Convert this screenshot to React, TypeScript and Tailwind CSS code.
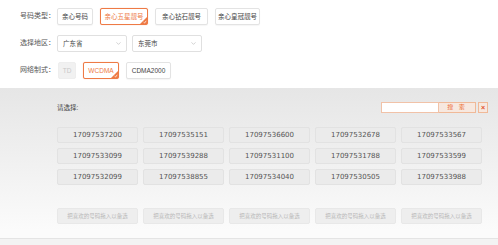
import { ChevronDown } from 'lucide-react';

const font = { fontFamily: '"Liberation Sans", "Noto Sans CJK SC", sans-serif' };

const numbers = [
    '17097537200', '17097535151', '17097536600', '17097532678', '17097533567',
    '17097533099', '17097539288', '17097531100', '17097531788', '17097533599',
    '17097532099', '17097538855', '17097534040', '17097530505', '17097533988',
];

function Corner() {
    return (
        <svg className="absolute right-0 bottom-0" width="7" height="7" viewBox="0 0 7 7">
            <polygon points="7,0 7,7 0,7" fill="#ee7a45" />
            <path d="M3.6 5.2 L4.6 6 L6.2 3.8" stroke="#fff" strokeWidth="0.7" fill="none" />
        </svg>
    );
}

function Opt({ label, w, active, disabled }: { label: string; w: string; active?: boolean; disabled?: boolean }) {
    const base = 'relative h-[17px] shrink-0 whitespace-nowrap flex items-center justify-center rounded-[2px] text-[6.5px] border';
    const look = active
        ? 'border-[#ee7a45] text-[#ee7a45] bg-white shadow-[0_0_1px_#f3b08f]'
        : disabled
            ? 'border-[#eeeeee] bg-[#f1f1f1] text-[#c8c8c8]'
            : 'border-[#e3e3e3] bg-white text-[#444] shadow-[0_1px_1px_rgba(0,0,0,0.04)]';
    return (
        <div className={`${base} ${look} ${w}`}>
            {label}
            {active && <Corner />}
        </div>
    );
}

function Row({ label, children }: { label: string; children: React.ReactNode }) {
    return (
        <div className="flex items-center h-[17px]">
            <div className="w-[37px] shrink-0 whitespace-nowrap text-[7px] text-[#555]">{label}</div>
            <div className="flex items-center gap-[7px]">{children}</div>
        </div>
    );
}

function Select({ value }: { value: string }) {
    return (
        <div className="w-[70px] h-[17px] flex items-center justify-between pl-[5px] pr-[4px] border border-[#e0e0e0] rounded-[2px] bg-white text-[6.5px] text-[#444]">
            <span>{value}</span>
            <ChevronDown size={7} color="#999" strokeWidth={1.5} />
        </div>
    );
}

export default function App() {
    return (
        <div className="w-[498px] h-[245px] bg-white overflow-hidden flex flex-col" style={font}>
            <div className="pt-[8px] pl-[20px] flex flex-col gap-[10px]">
                <Row label="号码类型：">
                    <Opt label="亲心号码" w="w-[36px]" />
                    <Opt label="亲心五星靓号" w="w-[48px]" active />
                    <Opt label="亲心钻石靓号" w="w-[53px]" />
                    <Opt label="亲心皇冠靓号" w="w-[45px]" />
                </Row>
                <Row label="选择地区：">
                    <Select value="广东省" />
                    <div className="-ml-[2px]">
                        <Select value="东莞市" />
                    </div>
                </Row>
                <Row label="网络制式：">
                    <Opt label="TD" w="w-[18px] ml-[1px]" disabled />
                    <Opt label="WCDMA" w="w-[36px]" active />
                    <Opt label="CDMA2000" w="w-[45px]" />
                </Row>
            </div>

            <div className="mt-[9px] h-[142px] bg-gradient-to-b from-[#e6e6e6] via-[#f0f0f0] to-[#fbfbfb] pl-[57px] pr-[10px] pt-[14px]">
                <div className="flex items-center justify-between h-[11px]">
                    <span className="text-[6.5px] text-[#444]">请选择:</span>
                    <div className="flex items-center">
                        <div className="w-[58px] h-[11px] bg-white border border-[#f1c2a8]" />
                        <div className="w-[37px] h-[11px] flex items-center justify-center bg-[#f7e8df] border border-[#f0b998] border-l-0 text-[6px] text-[#ec6f36] tracking-[2px]">搜 索</div>
                        <div className="ml-[2px] w-[10px] h-[11px] flex items-center justify-center bg-[#f7e8df] border border-[#f0b998] text-[7px] font-bold text-[#e2502a] leading-none">×</div>
                    </div>
                </div>
                <div className="mt-[14px] grid grid-cols-[repeat(5,81px)] gap-x-[5px] gap-y-[5px]">
                    {numbers.map((n) => (
                        <div key={n} className="h-[16px] flex items-center justify-center rounded-[2px] bg-[#ebebeb] border border-[#e2e2e2] text-[7px] text-[#555]" style={{ fontFamily: '"DejaVu Sans", sans-serif' }}>
                            {n}
                        </div>
                    ))}
                </div>
                <div className="mt-[23px] grid grid-cols-[repeat(5,81px)] gap-x-[5px]">
                    {Array.from({ length: 5 }).map((_, i) => (
                        <div key={i} className="h-[16px] flex items-center justify-center rounded-[2px] bg-[#eeeeee] border border-[#e8e8e8] text-[5.5px] text-[#b8b8b8]">
                            把喜欢的号码拖入以备选
                        </div>
                    ))}
                </div>
            </div>

            <div className="h-[8px] bg-[#fbfbfb]" />
            <div className="flex-1 border-t border-[#e4e4e4] bg-[#f3f3f3]" />
        </div>
    );
}
